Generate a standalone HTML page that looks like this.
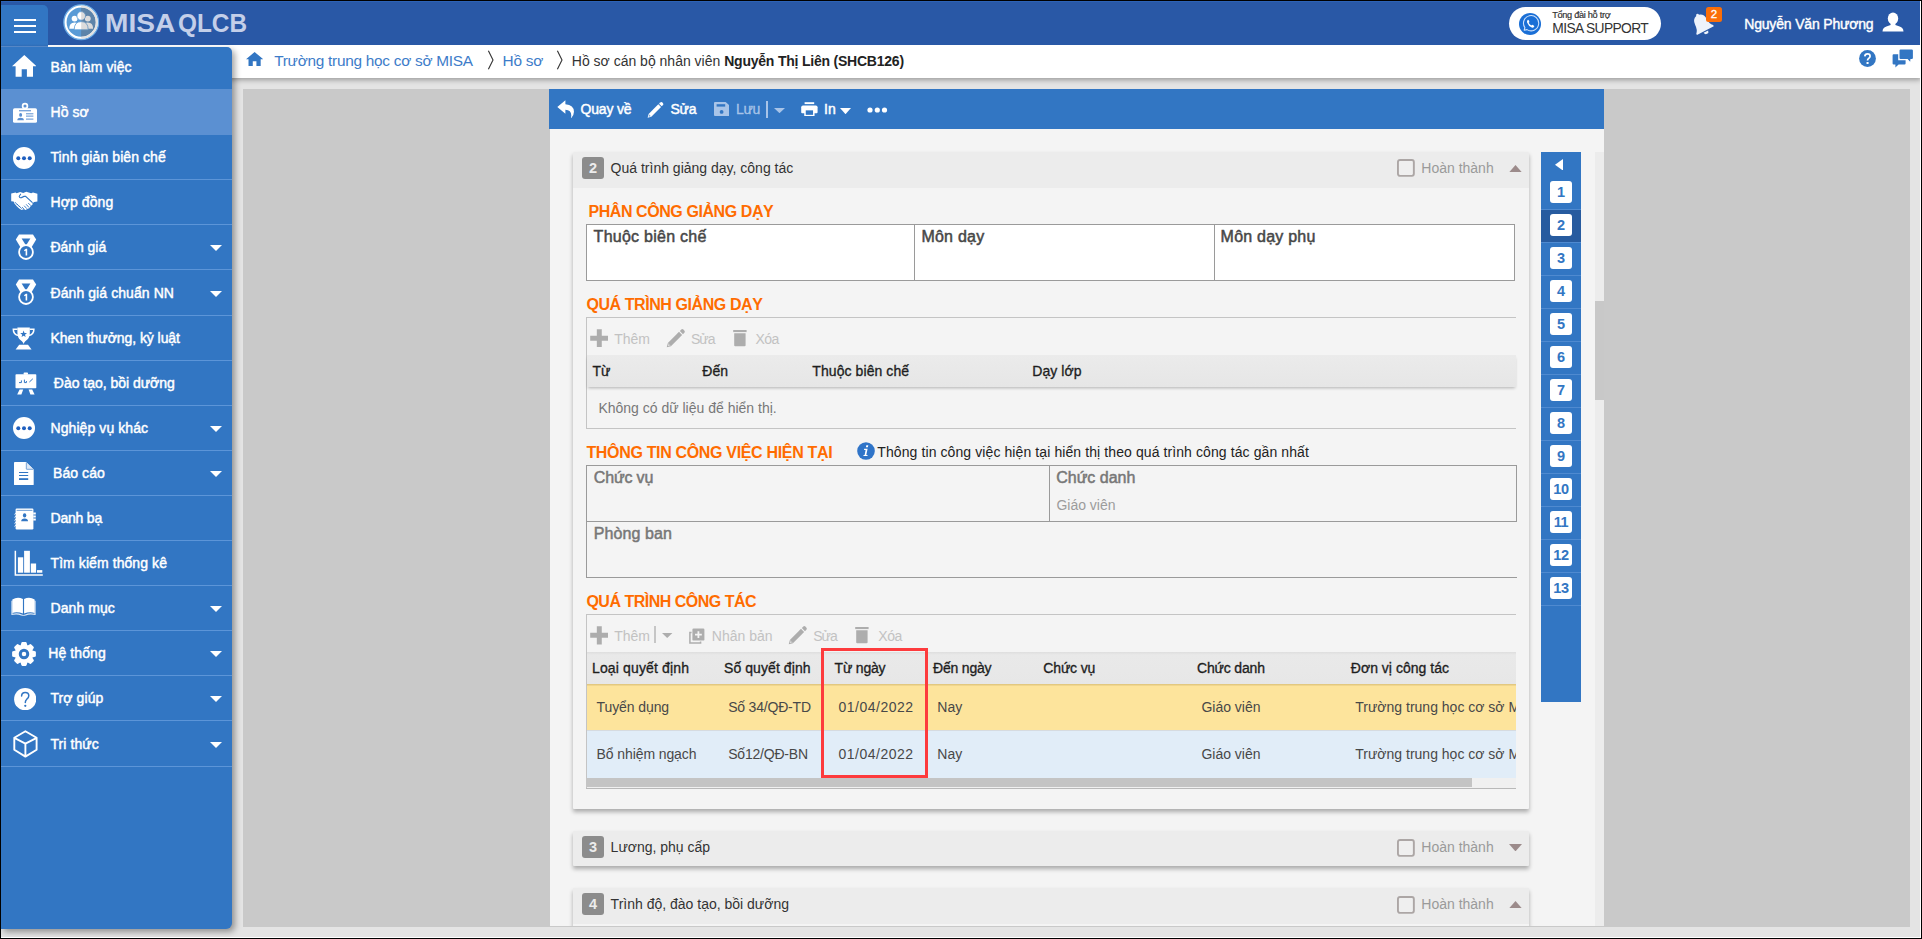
<!DOCTYPE html>
<html lang="vi">
<head>
<meta charset="utf-8">
<title>MISA QLCB</title>
<style>
*{box-sizing:border-box;margin:0;padding:0}
html,body{width:1922px;height:939px;overflow:hidden;background:#000}
body{font-family:"Liberation Sans",sans-serif;font-size:14px;color:#222;position:relative}
.abs{position:absolute}
#frame{position:absolute;left:1px;top:1px;width:1920px;height:937px;background:#fff;overflow:hidden}
#app{position:absolute;left:0;top:0;width:1919px;height:936px;background:#e4e4e4;overflow:hidden}
/* all children of #app are placed in page coords minus 1 */
#hdr{position:absolute;left:0;top:0;width:1919px;height:44px;background:#2958a6;border-top:1px solid #2c62b6}
#tab{position:absolute;left:0;top:4px;width:47px;height:44px;background:#3276c3;border-radius:0 5px 0 0}
#tab i{position:absolute;left:13px;width:22px;height:2px;background:#fff}
#crumb{position:absolute;left:0;top:44px;width:1919px;height:33px;background:#fff;box-shadow:0 1px 5px 1px rgba(0,0,0,.32)}
#side{position:absolute;left:0;top:46px;width:231px;height:882px;background:#3276c3;border-radius:0 5px 6px 0;box-shadow:3px 3px 6px 0 rgba(0,0,0,.36);overflow:hidden}
.mi{position:absolute;left:0;width:231px;border-bottom:1px solid #5c95d8;color:#fff}
.mi.sel{background:#5b90d2;border:0}
.mi span{position:absolute;left:49.5px;top:50%;margin-top:-9px;line-height:18px;white-space:nowrap;font-size:14px;letter-spacing:.08px;-webkit-text-stroke:.45px #fff}
.mi svg{position:absolute}
.mi .car{position:absolute;left:209px;top:50%;margin-top:-2px;width:0;height:0;border-left:6px solid transparent;border-right:6px solid transparent;border-top:6px solid #fff}
#gray{position:absolute;left:242px;top:88px;width:1667px;height:838px;background:#c9c9c9}
#panel{position:absolute;left:548px;top:88px;width:1055px;height:837px;background:#f4f4f4;overflow:hidden}
#tbar{position:absolute;left:0;top:0;width:1055px;height:40px;background:#3276c3;color:#fff}
</style>
</head>
<body>
<div id="frame"><div id="app">
  <div id="gray"></div>
  <div id="panel">
    <div id="tbar"></div>
    <svg class="abs" style="left:7.60px;top:10.60px;" width="17.4" height="18.6" viewBox="0 0 17 18.2"><path fill="#fff" d="M0.3 6.9 L8.2 0.3 V4.1 Q16.6 4.6 16.6 11.6 Q16.6 15.2 13.6 18 Q15.4 9.6 8.2 9.5 V13.5 Z"/></svg>
<div class="abs" style="left:31.60px;top:11.15px;font-size:14px;line-height:18px;color:#fff;white-space:nowrap;letter-spacing:-0.2px;-webkit-text-stroke:0.45px #fff">Quay về</div>
<svg class="abs" style="left:97.60px;top:11.90px;" width="17.4" height="17.4" viewBox="0 0 19 19"><g fill="#fff"><path d="M0.7 18.3 L1.77 14.27 L4.73 17.23 Z"/><path d="M1.77 14.27 L12.37 3.67 L15.33 6.63 L4.73 17.23 Z"/><path d="M13.15 2.89 L14.5 1.54 Q15.5 0.6 16.5 1.5 L17.5 2.5 Q18.4 3.5 17.46 4.5 L16.11 5.85 Z"/></g><path d="M1.75 16.9 L2.35 15.35 L3.65 16.65 Z" fill="#3276c3"/></svg>
<div class="abs" style="left:121.50px;top:11.15px;font-size:14px;line-height:18px;color:#fff;white-space:nowrap;letter-spacing:-0.25px;-webkit-text-stroke:0.45px #fff">Sửa</div>
<svg class="abs" style="left:164.60px;top:12.80px;" width="15.6" height="14" viewBox="0 0 15.6 14"><path fill="#a8c4e8" d="M1 0 H11.6 L15.6 3.6 V13 Q15.6 14 14.6 14 H1 Q0 14 0 13 V1 Q0 0 1 0 Z"/><rect x="2.6" y="2.2" width="8.6" height="2.4" fill="#3276c3"/><circle cx="7.6" cy="9.9" r="1.9" fill="#3276c3"/></svg>
<div class="abs" style="left:187.00px;top:11.15px;font-size:14px;line-height:18px;color:#a8c4e8;white-space:nowrap;letter-spacing:-0.3px;-webkit-text-stroke:0.3px #a8c4e8">Lưu</div>
<div class="abs" style="left:217.40px;top:12.00px;width:2px;height:17px;background:#a8c4e8"></div>
<svg class="abs" style="left:225.00px;top:18.80px;" width="11" height="5.2" viewBox="0 0 11 5.2"><path fill="#a8c4e8" d="M0 0 H11 L5.5 5.2 Z"/></svg>
<svg class="abs" style="left:252.20px;top:12.60px;" width="16.8" height="14.4" viewBox="0 0 16.8 14.4"><g fill="#fff"><rect x="3.6" y="0.2" width="9.6" height="1.9"/><path d="M2 3.4 H14.8 Q16.6 3.4 16.6 5.2 V10.2 Q16.6 11.2 15.6 11.2 H1.2 Q0.2 11.2 0.2 10.2 V5.2 Q0.2 3.4 2 3.4 Z"/></g><rect x="4" y="7.6" width="8.8" height="6" fill="#3276c3" stroke="#fff" stroke-width="1.5"/></svg>
<div class="abs" style="left:275.00px;top:11.15px;font-size:14px;line-height:18px;color:#fff;white-space:nowrap;-webkit-text-stroke:0.45px #fff">In</div>
<svg class="abs" style="left:291.20px;top:18.80px;" width="11" height="6.2" viewBox="0 0 11 6.2"><path fill="#fff" d="M0 0 H11 L5.5 6.2 Z"/></svg>
<svg class="abs" style="left:317.60px;top:18.00px;" width="21" height="6" viewBox="0 0 21 6"><g fill="#fff"><circle cx="3" cy="3" r="2.6"/><circle cx="10.3" cy="3" r="2.6"/><circle cx="17.5" cy="3" r="2.6"/></g></svg>
<div class="abs" style="left:0.00px;top:40.00px;width:1px;height:800px;background:#c9c9c9"></div>
<div class="abs" style="left:24.00px;top:63.00px;width:956px;height:657px;background:#f4f4f4;border-radius:1px;box-shadow:0 3px 4px rgba(0,0,0,.30)"></div>
<div class="abs" style="left:24.00px;top:63.00px;width:956px;height:36px;background:#ececec;border-radius:1px 1px 0 0"></div>
<div class="abs" style="left:33.00px;top:68.00px;width:22px;height:22px;background:#8c8c8c;border-radius:3px"></div>
<div class="abs" style="left:33.00px;top:69.68px;font-size:14.5px;line-height:19px;color:#ececec;white-space:nowrap;font-weight:700;width:22px;text-align:center">2</div>
<div class="abs" style="left:61.60px;top:70.45px;font-size:14px;line-height:18px;color:#333;white-space:nowrap">Quá trình giảng dạy, công tác</div>
<svg class="abs" style="left:848.00px;top:70.20px;" width="17.8" height="17.8" viewBox="0 0 17.8 17.8"><rect x="0.95" y="0.95" width="15.9" height="15.9" rx="2" fill="#efefef" stroke="#aca6a5" stroke-width="1.9"/></svg>
<div class="abs" style="left:872.30px;top:70.45px;font-size:14px;line-height:18px;color:#9a9a9a;white-space:nowrap">Hoàn thành</div>
<svg class="abs" style="left:959.60px;top:75.60px;" width="13" height="7.4" viewBox="0 0 13 7.4"><path fill="#9c8b8b" d="M6.5 0 L13 7.4 H0 Z"/></svg>
<div class="abs" style="left:39.40px;top:112.16px;font-size:16px;line-height:21px;color:#ff6c00;white-space:nowrap;font-weight:700;letter-spacing:-0.42px">PHÂN CÔNG GIẢNG DẠY</div>
<div class="abs" style="left:37.00px;top:135.00px;width:929px;height:57px;background:#fff;border:1px solid #9a9a9a"></div>
<div class="abs" style="left:365.00px;top:135.00px;width:1px;height:57px;background:#9a9a9a"></div>
<div class="abs" style="left:665.00px;top:135.00px;width:1px;height:57px;background:#9a9a9a"></div>
<div class="abs" style="left:44.60px;top:136.76px;font-size:16px;line-height:21px;color:#474747;white-space:nowrap;letter-spacing:0.26px;-webkit-text-stroke:0.5px #474747">Thuộc biên chế</div>
<div class="abs" style="left:372.40px;top:136.76px;font-size:16px;line-height:21px;color:#474747;white-space:nowrap;letter-spacing:0.23px;-webkit-text-stroke:0.5px #474747">Môn dạy</div>
<div class="abs" style="left:671.60px;top:136.76px;font-size:16px;line-height:21px;color:#474747;white-space:nowrap;letter-spacing:0.23px;-webkit-text-stroke:0.5px #474747">Môn dạy phụ</div>
<div class="abs" style="left:37.40px;top:205.16px;font-size:16px;line-height:21px;color:#ff6c00;white-space:nowrap;font-weight:700;letter-spacing:-0.42px">QUÁ TRÌNH GIẢNG DẠY</div>
<div class="abs" style="left:37.00px;top:228.00px;width:930px;height:112px;border:1px solid #c4c4c4;border-right:0"></div>
<svg class="abs" style="left:40.50px;top:239.90px;" width="18.6" height="18.6" viewBox="0 0 18 18"><path fill="#adadad" d="M6.6 0.2 H11.4 V6.6 H17.8 V11.4 H11.4 V17.8 H6.6 V11.4 H0.2 V6.6 H6.6 Z"/></svg>
<div class="abs" style="left:65.20px;top:240.55px;font-size:14px;line-height:18px;color:#c2c2c2;white-space:nowrap">Thêm</div>
<svg class="abs" style="left:116.60px;top:238.70px;" width="20" height="20" viewBox="0 0 19 19"><g fill="#adadad"><path d="M0.7 18.3 L1.77 14.27 L4.73 17.23 Z"/><path d="M1.77 14.27 L12.37 3.67 L15.33 6.63 L4.73 17.23 Z"/><path d="M13.15 2.89 L14.5 1.54 Q15.5 0.6 16.5 1.5 L17.5 2.5 Q18.4 3.5 17.46 4.5 L16.11 5.85 Z"/></g><path d="M1.75 16.9 L2.35 15.35 L3.65 16.65 Z" fill="#f4f4f4"/></svg>
<div class="abs" style="left:142.00px;top:240.55px;font-size:14px;line-height:18px;color:#c2c2c2;white-space:nowrap;letter-spacing:-1.0px">Sửa</div>
<svg class="abs" style="left:183.90px;top:240.60px;" width="14" height="17" viewBox="0 0 14 17"><g fill="#adadad"><rect x="0.2" y="0" width="13.4" height="2.1"/><path d="M1.2 3.3 H12.6 V15.2 Q12.6 16.3 11.5 16.3 H2.3 Q1.2 16.3 1.2 15.2 Z"/></g></svg>
<div class="abs" style="left:206.50px;top:240.55px;font-size:14px;line-height:18px;color:#c2c2c2;white-space:nowrap;letter-spacing:-0.5px">Xóa</div>
<div class="abs" style="left:38.00px;top:266.00px;width:929px;height:32px;background:linear-gradient(#ebebeb,#e6e6e6);box-shadow:0 2px 3px -1px rgba(0,0,0,.28)"></div>
<div class="abs" style="left:43.40px;top:273.15px;font-size:14px;line-height:18px;color:#1e1e1e;white-space:nowrap;letter-spacing:0.08px;-webkit-text-stroke:0.32px #1e1e1e">Từ</div>
<div class="abs" style="left:153.20px;top:273.15px;font-size:14px;line-height:18px;color:#1e1e1e;white-space:nowrap;letter-spacing:0.08px;-webkit-text-stroke:0.32px #1e1e1e">Đến</div>
<div class="abs" style="left:263.30px;top:273.15px;font-size:14px;line-height:18px;color:#1e1e1e;white-space:nowrap;letter-spacing:0.08px;-webkit-text-stroke:0.32px #1e1e1e">Thuộc biên chế</div>
<div class="abs" style="left:483.20px;top:273.15px;font-size:14px;line-height:18px;color:#1e1e1e;white-space:nowrap;letter-spacing:0.08px;-webkit-text-stroke:0.32px #1e1e1e">Dạy lớp</div>
<div class="abs" style="left:49.40px;top:310.35px;font-size:14px;line-height:18px;color:#787878;white-space:nowrap">Không có dữ liệu để hiển thị.</div>
<div class="abs" style="left:37.40px;top:353.16px;font-size:16px;line-height:21px;color:#ff6c00;white-space:nowrap;font-weight:700;letter-spacing:-0.33px">THÔNG TIN CÔNG VIỆC HIỆN TẠI</div>
<svg class="abs" style="left:307.70px;top:353.30px;" width="18" height="18" viewBox="0 0 18 18"><circle cx="9" cy="9" r="8.8" fill="#2f74c8"/><path fill="#fff" d="M9.3 3.2 H11.3 L10.9 5.2 H8.9 Z M7.2 6.8 H10.6 L9.3 13 H10.6 L10.4 14 H6.4 L6.6 13 H7.6 L8.6 7.9 H7 Z"/></svg>
<div class="abs" style="left:328.30px;top:354.05px;font-size:14px;line-height:18px;color:#222;white-space:nowrap;letter-spacing:0.095px">Thông tin công việc hiện tại hiển thị theo quá trình công tác gần nhất</div>
<div class="abs" style="left:37.00px;top:376.00px;width:931px;height:57px;border:1px solid #9a9a9a"></div>
<div class="abs" style="left:500.00px;top:376.00px;width:1px;height:57px;background:#9a9a9a"></div>
<div class="abs" style="left:37.00px;top:432.00px;width:931px;height:57px;border:1px solid #9a9a9a;border-right:0"></div>
<div class="abs" style="left:44.80px;top:378.16px;font-size:16px;line-height:21px;color:#777;white-space:nowrap;letter-spacing:-0.17px;-webkit-text-stroke:0.5px #777">Chức vụ</div>
<div class="abs" style="left:507.20px;top:378.16px;font-size:16px;line-height:21px;color:#777;white-space:nowrap;-webkit-text-stroke:0.5px #777">Chức danh</div>
<div class="abs" style="left:507.40px;top:406.75px;font-size:14px;line-height:18px;color:#9c9c9c;white-space:nowrap">Giáo viên</div>
<div class="abs" style="left:44.80px;top:434.16px;font-size:16px;line-height:21px;color:#777;white-space:nowrap;letter-spacing:0.1px;-webkit-text-stroke:0.5px #777">Phòng ban</div>
<div class="abs" style="left:37.40px;top:501.76px;font-size:16px;line-height:21px;color:#ff6c00;white-space:nowrap;font-weight:700;letter-spacing:-0.5px">QUÁ TRÌNH CÔNG TÁC</div>
<div class="abs" style="left:37.00px;top:525.00px;width:930px;height:175px;border:1px solid #c4c4c4;border-right:0"></div>
<svg class="abs" style="left:40.50px;top:537.10px;" width="18.6" height="18.6" viewBox="0 0 18 18"><path fill="#adadad" d="M6.6 0.2 H11.4 V6.6 H17.8 V11.4 H11.4 V17.8 H6.6 V11.4 H0.2 V6.6 H6.6 Z"/></svg>
<div class="abs" style="left:65.20px;top:537.75px;font-size:14px;line-height:18px;color:#c2c2c2;white-space:nowrap">Thêm</div>
<div class="abs" style="left:105.40px;top:537.00px;width:1.6px;height:17px;background:#c6c6c6"></div>
<svg class="abs" style="left:113.20px;top:543.60px;" width="10.4" height="5" viewBox="0 0 10.4 5"><path fill="#adadad" d="M0 0 H10.4 L5.2 5 Z"/></svg>
<svg class="abs" style="left:139.60px;top:538.60px;" width="16" height="16" viewBox="0 0 16 16"><path fill="none" stroke="#adadad" stroke-width="1.5" d="M2.6 4.4 H0.9 V15 H11.6 V13.4"/><rect x="3.4" y="0.6" width="12" height="12" rx="1.2" fill="#adadad"/><path d="M9.4 3.2 V10 M6 6.6 H12.8" stroke="#f4f4f4" stroke-width="1.8"/></svg>
<div class="abs" style="left:162.80px;top:537.75px;font-size:14px;line-height:18px;color:#c2c2c2;white-space:nowrap">Nhân bản</div>
<svg class="abs" style="left:239.10px;top:535.70px;" width="20" height="20" viewBox="0 0 19 19"><g fill="#adadad"><path d="M0.7 18.3 L1.77 14.27 L4.73 17.23 Z"/><path d="M1.77 14.27 L12.37 3.67 L15.33 6.63 L4.73 17.23 Z"/><path d="M13.15 2.89 L14.5 1.54 Q15.5 0.6 16.5 1.5 L17.5 2.5 Q18.4 3.5 17.46 4.5 L16.11 5.85 Z"/></g><path d="M1.75 16.9 L2.35 15.35 L3.65 16.65 Z" fill="#f4f4f4"/></svg>
<div class="abs" style="left:264.20px;top:537.75px;font-size:14px;line-height:18px;color:#c2c2c2;white-space:nowrap;letter-spacing:-1.0px">Sửa</div>
<svg class="abs" style="left:305.80px;top:537.80px;" width="14" height="17" viewBox="0 0 14 17"><g fill="#adadad"><rect x="0.2" y="0" width="13.4" height="2.1"/><path d="M1.2 3.3 H12.6 V15.2 Q12.6 16.3 11.5 16.3 H2.3 Q1.2 16.3 1.2 15.2 Z"/></g></svg>
<div class="abs" style="left:329.30px;top:537.75px;font-size:14px;line-height:18px;color:#c2c2c2;white-space:nowrap;letter-spacing:-0.5px">Xóa</div>
<div class="abs" style="left:38.00px;top:563.40px;width:929px;height:31.6px;background:linear-gradient(#dedede,#e9e9e9 3px,#e7e7e7)"></div>
<div class="abs" style="left:43.00px;top:569.85px;font-size:14px;line-height:18px;color:#1e1e1e;white-space:nowrap;letter-spacing:0.14px;-webkit-text-stroke:0.32px #1e1e1e">Loại quyết định</div>
<div class="abs" style="left:175.00px;top:569.85px;font-size:14px;line-height:18px;color:#1e1e1e;white-space:nowrap;letter-spacing:0.08px;-webkit-text-stroke:0.32px #1e1e1e">Số quyết định</div>
<div class="abs" style="left:285.60px;top:569.85px;font-size:14px;line-height:18px;color:#1e1e1e;white-space:nowrap;letter-spacing:-0.2px;-webkit-text-stroke:0.32px #1e1e1e">Từ ngày</div>
<div class="abs" style="left:384.00px;top:569.85px;font-size:14px;line-height:18px;color:#1e1e1e;white-space:nowrap;letter-spacing:-0.19px;-webkit-text-stroke:0.32px #1e1e1e">Đến ngày</div>
<div class="abs" style="left:494.30px;top:569.85px;font-size:14px;line-height:18px;color:#1e1e1e;white-space:nowrap;letter-spacing:-0.15px;-webkit-text-stroke:0.32px #1e1e1e">Chức vụ</div>
<div class="abs" style="left:648.00px;top:569.85px;font-size:14px;line-height:18px;color:#1e1e1e;white-space:nowrap;letter-spacing:-0.17px;-webkit-text-stroke:0.32px #1e1e1e">Chức danh</div>
<div class="abs" style="left:801.80px;top:569.85px;font-size:14px;line-height:18px;color:#1e1e1e;white-space:nowrap;letter-spacing:0.02px;-webkit-text-stroke:0.32px #1e1e1e">Đơn vị công tác</div>
<div class="abs" style="left:38.00px;top:595.00px;width:929px;height:46.4px;background:linear-gradient(#dcc179,#fde49c 2.5px)"></div>
<div class="abs" style="left:38.00px;top:641.40px;width:929px;height:47.4px;background:#e1edf8;border-top:1px solid #d6dbe0"></div>
<div class="abs" style="left:47.60px;top:609.05px;font-size:14px;line-height:18px;color:#484848;white-space:nowrap;letter-spacing:-0.1px">Tuyển dụng</div>
<div class="abs" style="left:179.20px;top:609.05px;font-size:14px;line-height:18px;color:#484848;white-space:nowrap;letter-spacing:-0.2px">Số 34/QĐ-TD</div>
<div class="abs" style="left:289.50px;top:609.05px;font-size:14px;line-height:18px;color:#484848;white-space:nowrap;letter-spacing:0.5px">01/04/2022</div>
<div class="abs" style="left:388.30px;top:609.05px;font-size:14px;line-height:18px;color:#484848;white-space:nowrap">Nay</div>
<div class="abs" style="left:652.40px;top:609.05px;font-size:14px;line-height:18px;color:#484848;white-space:nowrap">Giáo viên</div>
<div class="abs" style="left:806.30px;top:608.50px;width:160.7px;overflow:hidden;font-size:14px;line-height:18px;color:#484848;white-space:nowrap">Trường trung học cơ sở MISA</div>
<div class="abs" style="left:47.60px;top:656.05px;font-size:14px;line-height:18px;color:#484848;white-space:nowrap;letter-spacing:-0.1px">Bổ nhiệm ngạch</div>
<div class="abs" style="left:179.20px;top:656.05px;font-size:14px;line-height:18px;color:#484848;white-space:nowrap;letter-spacing:-0.2px">Số12/QĐ-BN</div>
<div class="abs" style="left:289.50px;top:656.05px;font-size:14px;line-height:18px;color:#484848;white-space:nowrap;letter-spacing:0.5px">01/04/2022</div>
<div class="abs" style="left:388.30px;top:656.05px;font-size:14px;line-height:18px;color:#484848;white-space:nowrap">Nay</div>
<div class="abs" style="left:652.40px;top:656.05px;font-size:14px;line-height:18px;color:#484848;white-space:nowrap">Giáo viên</div>
<div class="abs" style="left:806.30px;top:655.50px;width:160.7px;overflow:hidden;font-size:14px;line-height:18px;color:#484848;white-space:nowrap">Trường trung học cơ sở MISA</div>
<div class="abs" style="left:38.00px;top:688.60px;width:929px;height:10.4px;background:#f0f0f0"></div>
<div class="abs" style="left:38.00px;top:688.60px;width:885px;height:9.4px;background:#c4c4c4"></div>
<div class="abs" style="left:37.00px;top:699.00px;width:930px;height:1.2px;background:#b9b9b9"></div>
<div class="abs" style="left:272.00px;top:559.00px;width:107.4px;height:130px;border:3px solid #fd3b3d"></div>
<div class="abs" style="left:24.00px;top:742.00px;width:956px;height:35px;background:#ececec;border-radius:1px;box-shadow:0 3px 4px rgba(0,0,0,.30)"></div>
<div class="abs" style="left:33.00px;top:747.00px;width:22px;height:22px;background:#8c8c8c;border-radius:3px"></div>
<div class="abs" style="left:33.00px;top:748.68px;font-size:14.5px;line-height:19px;color:#ececec;white-space:nowrap;font-weight:700;width:22px;text-align:center">3</div>
<div class="abs" style="left:61.60px;top:749.45px;font-size:14px;line-height:18px;color:#333;white-space:nowrap">Lương, phụ cấp</div>
<svg class="abs" style="left:848.00px;top:750.00px;" width="17.8" height="17.8" viewBox="0 0 17.8 17.8"><rect x="0.95" y="0.95" width="15.9" height="15.9" rx="2" fill="#efefef" stroke="#aca6a5" stroke-width="1.9"/></svg>
<div class="abs" style="left:872.30px;top:749.45px;font-size:14px;line-height:18px;color:#9a9a9a;white-space:nowrap">Hoàn thành</div>
<svg class="abs" style="left:959.60px;top:755.00px;" width="13" height="7.4" viewBox="0 0 13 7.4"><path fill="#9c8b8b" d="M0 0 H13 L6.5 7.4 Z"/></svg>
<div class="abs" style="left:24.00px;top:799.00px;width:956px;height:60px;background:#f4f4f4;border-radius:1px;box-shadow:0 3px 4px rgba(0,0,0,.30)"></div>
<div class="abs" style="left:24.00px;top:799.00px;width:956px;height:36px;background:#ececec"></div>
<div class="abs" style="left:33.00px;top:804.00px;width:22px;height:22px;background:#8c8c8c;border-radius:3px"></div>
<div class="abs" style="left:33.00px;top:805.68px;font-size:14.5px;line-height:19px;color:#ececec;white-space:nowrap;font-weight:700;width:22px;text-align:center">4</div>
<div class="abs" style="left:61.60px;top:806.45px;font-size:14px;line-height:18px;color:#333;white-space:nowrap">Trình độ, đào tạo, bồi dưỡng</div>
<svg class="abs" style="left:848.00px;top:807.00px;" width="17.8" height="17.8" viewBox="0 0 17.8 17.8"><rect x="0.95" y="0.95" width="15.9" height="15.9" rx="2" fill="#efefef" stroke="#aca6a5" stroke-width="1.9"/></svg>
<div class="abs" style="left:872.30px;top:806.45px;font-size:14px;line-height:18px;color:#9a9a9a;white-space:nowrap">Hoàn thành</div>
<svg class="abs" style="left:959.60px;top:811.60px;" width="13" height="7.4" viewBox="0 0 13 7.4"><path fill="#9c8b8b" d="M6.5 0 L13 7.4 H0 Z"/></svg>
<div class="abs" style="left:992.00px;top:63.00px;width:40px;height:550px;background:#3276c3"></div>
<svg class="abs" style="left:1006.40px;top:69.80px;" width="8" height="11.6" viewBox="0 0 8 11.6"><path fill="#fff" d="M8 0 V11.6 L0 5.8 Z"/></svg>
<div class="abs" style="left:992.00px;top:88.00px;width:40px;height:33px;border-bottom:1px solid #4f8ad0"></div>
<div class="abs" style="left:1001.00px;top:92.00px;width:22px;height:22px;background:#fff;border-radius:3px"></div>
<div class="abs" style="left:1001.00px;top:93.68px;font-size:14.5px;line-height:19px;color:#3276c3;white-space:nowrap;font-weight:700;width:22px;text-align:center;letter-spacing:-0.3px">1</div>
<div class="abs" style="left:992.00px;top:121.00px;width:40px;height:33px;background:#275b9f;border-bottom:1px solid #4f8ad0"></div>
<div class="abs" style="left:1001.00px;top:125.00px;width:22px;height:22px;background:#fff;border-radius:3px"></div>
<div class="abs" style="left:1001.00px;top:126.68px;font-size:14.5px;line-height:19px;color:#3276c3;white-space:nowrap;font-weight:700;width:22px;text-align:center;letter-spacing:-0.3px">2</div>
<div class="abs" style="left:992.00px;top:154.00px;width:40px;height:33px;border-bottom:1px solid #4f8ad0"></div>
<div class="abs" style="left:1001.00px;top:158.00px;width:22px;height:22px;background:#fff;border-radius:3px"></div>
<div class="abs" style="left:1001.00px;top:159.68px;font-size:14.5px;line-height:19px;color:#3276c3;white-space:nowrap;font-weight:700;width:22px;text-align:center;letter-spacing:-0.3px">3</div>
<div class="abs" style="left:992.00px;top:187.00px;width:40px;height:33px;border-bottom:1px solid #4f8ad0"></div>
<div class="abs" style="left:1001.00px;top:191.00px;width:22px;height:22px;background:#fff;border-radius:3px"></div>
<div class="abs" style="left:1001.00px;top:192.68px;font-size:14.5px;line-height:19px;color:#3276c3;white-space:nowrap;font-weight:700;width:22px;text-align:center;letter-spacing:-0.3px">4</div>
<div class="abs" style="left:992.00px;top:220.00px;width:40px;height:33px;border-bottom:1px solid #4f8ad0"></div>
<div class="abs" style="left:1001.00px;top:224.00px;width:22px;height:22px;background:#fff;border-radius:3px"></div>
<div class="abs" style="left:1001.00px;top:225.68px;font-size:14.5px;line-height:19px;color:#3276c3;white-space:nowrap;font-weight:700;width:22px;text-align:center;letter-spacing:-0.3px">5</div>
<div class="abs" style="left:992.00px;top:253.00px;width:40px;height:33px;border-bottom:1px solid #4f8ad0"></div>
<div class="abs" style="left:1001.00px;top:257.00px;width:22px;height:22px;background:#fff;border-radius:3px"></div>
<div class="abs" style="left:1001.00px;top:258.68px;font-size:14.5px;line-height:19px;color:#3276c3;white-space:nowrap;font-weight:700;width:22px;text-align:center;letter-spacing:-0.3px">6</div>
<div class="abs" style="left:992.00px;top:286.00px;width:40px;height:33px;border-bottom:1px solid #4f8ad0"></div>
<div class="abs" style="left:1001.00px;top:290.00px;width:22px;height:22px;background:#fff;border-radius:3px"></div>
<div class="abs" style="left:1001.00px;top:291.68px;font-size:14.5px;line-height:19px;color:#3276c3;white-space:nowrap;font-weight:700;width:22px;text-align:center;letter-spacing:-0.3px">7</div>
<div class="abs" style="left:992.00px;top:319.00px;width:40px;height:33px;border-bottom:1px solid #4f8ad0"></div>
<div class="abs" style="left:1001.00px;top:323.00px;width:22px;height:22px;background:#fff;border-radius:3px"></div>
<div class="abs" style="left:1001.00px;top:324.68px;font-size:14.5px;line-height:19px;color:#3276c3;white-space:nowrap;font-weight:700;width:22px;text-align:center;letter-spacing:-0.3px">8</div>
<div class="abs" style="left:992.00px;top:352.00px;width:40px;height:33px;border-bottom:1px solid #4f8ad0"></div>
<div class="abs" style="left:1001.00px;top:356.00px;width:22px;height:22px;background:#fff;border-radius:3px"></div>
<div class="abs" style="left:1001.00px;top:357.68px;font-size:14.5px;line-height:19px;color:#3276c3;white-space:nowrap;font-weight:700;width:22px;text-align:center;letter-spacing:-0.3px">9</div>
<div class="abs" style="left:992.00px;top:385.00px;width:40px;height:33px;border-bottom:1px solid #4f8ad0"></div>
<div class="abs" style="left:1001.00px;top:389.00px;width:22px;height:22px;background:#fff;border-radius:3px"></div>
<div class="abs" style="left:1001.00px;top:390.68px;font-size:14.5px;line-height:19px;color:#3276c3;white-space:nowrap;font-weight:700;width:22px;text-align:center;letter-spacing:-0.3px">10</div>
<div class="abs" style="left:992.00px;top:418.00px;width:40px;height:33px;border-bottom:1px solid #4f8ad0"></div>
<div class="abs" style="left:1001.00px;top:422.00px;width:22px;height:22px;background:#fff;border-radius:3px"></div>
<div class="abs" style="left:1001.00px;top:423.68px;font-size:14.5px;line-height:19px;color:#3276c3;white-space:nowrap;font-weight:700;width:22px;text-align:center;letter-spacing:-0.3px">11</div>
<div class="abs" style="left:992.00px;top:451.00px;width:40px;height:33px;border-bottom:1px solid #4f8ad0"></div>
<div class="abs" style="left:1001.00px;top:455.00px;width:22px;height:22px;background:#fff;border-radius:3px"></div>
<div class="abs" style="left:1001.00px;top:456.68px;font-size:14.5px;line-height:19px;color:#3276c3;white-space:nowrap;font-weight:700;width:22px;text-align:center;letter-spacing:-0.3px">12</div>
<div class="abs" style="left:992.00px;top:484.00px;width:40px;height:33px;border-bottom:1px solid #4f8ad0"></div>
<div class="abs" style="left:1001.00px;top:488.00px;width:22px;height:22px;background:#fff;border-radius:3px"></div>
<div class="abs" style="left:1001.00px;top:489.68px;font-size:14.5px;line-height:19px;color:#3276c3;white-space:nowrap;font-weight:700;width:22px;text-align:center;letter-spacing:-0.3px">13</div>
<div class="abs" style="left:1046.00px;top:63.00px;width:9px;height:775px;background:#ececec"></div>
<div class="abs" style="left:1046.00px;top:212.00px;width:9px;height:99px;background:#c8c8c8"></div>
  </div>
  <div id="crumb"><svg class="abs" style="left:245.20px;top:7.30px" width="17.2" height="14" viewBox="0 0 24.6 20"><path fill="#3276c3" d="M12.3 0 L24.6 10.4 H21 V20 H14.9 V13.2 H9.7 V20 H3.6 V10.4 H0 Z"/></svg>
<div class="abs" style="left:273.20px;top:6.70px;font-size:15.4px;line-height:18px;letter-spacing:-0.27px;color:#3d7cc9;white-space:nowrap">Trường trung học cơ sở MISA</div>
<svg class="abs" style="left:485.00px;top:5.00px" width="10" height="20" viewBox="0 0 10 20"><path d="M2.4 0.8 L7 10 L2.4 19.2" fill="none" stroke="#333" stroke-width="1.1"/></svg>
<div class="abs" style="left:501.60px;top:6.70px;font-size:15.4px;line-height:18px;letter-spacing:-0.27px;color:#3d7cc9;white-space:nowrap">Hồ sơ</div>
<svg class="abs" style="left:554.00px;top:5.00px" width="10" height="20" viewBox="0 0 10 20"><path d="M2.4 0.8 L7 10 L2.4 19.2" fill="none" stroke="#333" stroke-width="1.1"/></svg>
<div class="abs" style="left:570.80px;top:6.60px;font-size:14px;line-height:18px;color:#333;white-space:nowrap">Hồ sơ cán bộ nhân viên <b style="letter-spacing:-0.22px;color:#222">Nguyễn Thị Liên (SHCB126)</b></div>
<svg class="abs" style="left:1857.60px;top:5.10px" width="17" height="17" viewBox="0 0 17 17"><circle cx="8.5" cy="8.5" r="8.4" fill="#3276c3"/><path d="M5.8 6.4 Q6 3.9 8.5 3.9 Q11.1 3.9 11.1 6.2 Q11.1 7.4 9.7 8.4 Q8.5 9.3 8.5 10.6" fill="none" stroke="#fff" stroke-width="1.7"/><rect x="7.5" y="12" width="2.1" height="1.9" rx="0.5" fill="#fff"/></svg>
<svg class="abs" style="left:1890.50px;top:3.50px" width="22" height="19" viewBox="0 0 22 19">
<path fill="#3276c3" d="M1.6 5.3 H6.2 V11.2 H13.6 V14.6 Q13.6 15.6 12.6 15.6 H6.6 L3.4 18.6 V15.6 H1.6 Q0.6 15.6 0.6 14.6 V6.3 Q0.6 5.3 1.6 5.3 Z"/>
<path fill="#3276c3" d="M8.6 0.5 H19.8 Q20.9 0.5 20.9 1.6 V9 Q20.9 10.1 19.8 10.1 H18.4 L18.2 12.8 L15.6 10.1 H8.6 Q7.5 10.1 7.5 9 V1.6 Q7.5 0.5 8.6 0.5 Z"/></svg></div>
  <div id="hdr"><svg class="abs" style="left:62.00px;top:2.30px" width="36.4" height="36.4" viewBox="0 0 36.4 36.4">
<defs><clipPath id="lgc"><circle cx="18.2" cy="18.2" r="15.2"/></clipPath>
<radialGradient id="lgr" cx="50%" cy="50%" r="50%"><stop offset="0.9" stop-color="#8fc1ec"/><stop offset="0.97" stop-color="#5c9ddb" stop-opacity="0.9"/><stop offset="1" stop-color="#3f7fc4" stop-opacity="0.1"/></radialGradient></defs>
<circle cx="18.2" cy="18.2" r="18.1" fill="url(#lgr)"/><circle cx="18.2" cy="18.2" r="17.3" fill="none" stroke="#6aaae4" stroke-width="1.4" opacity="0.9"/>
<circle cx="18.2" cy="18.2" r="15.4" fill="#5a9bd6"/>
<path d="M18.2 2.5 A15.7 15.7 0 0 1 18.2 33.9 Z" fill="#4a81b6"/>
<g clip-path="url(#lgc)">
<g fill="#fff">
<circle cx="11.6" cy="14.6" r="2.95"/><circle cx="24.8" cy="14.6" r="2.95"/>
<path d="M6.3 24.7 Q6.3 18.6 11.6 18.6 Q13.4 18.6 14.6 19.4 L12.2 24.7 Z"/>
<path d="M30.1 24.7 Q30.1 18.6 24.8 18.6 Q23 18.6 21.8 19.4 L24.2 24.7 Z"/>
<circle cx="18.2" cy="11.9" r="4.3" stroke="#5a9bd6" stroke-width="0.8"/>
<path d="M11.2 25.8 Q11.2 17.6 18.2 17.6 Q25.2 17.6 25.2 25.8 Z" stroke="#5a9bd6" stroke-width="0.8"/>
</g>
<rect x="18.2" y="0" width="20" height="36.4" fill="#8a8a8a" opacity="0.30"/>
</g>
<circle cx="18.2" cy="18.2" r="15.6" fill="none" stroke="#fff" stroke-width="2"/>
<path d="M18.2 2.6 A15.6 15.6 0 0 1 18.2 33.8" fill="none" stroke="#e2e2e2" stroke-width="2"/>
</svg>
<div class="abs" style="left:103.80px;top:5.70px;font-size:26px;line-height:30px;font-weight:700;color:#c3cfe9;white-space:nowrap;transform:scaleX(1.08);transform-origin:0 0">MISA</div>
<div class="abs" style="left:177.00px;top:5.70px;font-size:26px;line-height:30px;font-weight:700;color:#c3cfe9;white-space:nowrap;transform:scaleX(0.938);transform-origin:0 0">QLCB</div>
<div class="abs" style="left:1508.00px;top:4.80px;width:152px;height:33px;border-radius:17px;background:#fff"></div>
<svg class="abs" style="left:1518.00px;top:10.80px" width="22" height="22" viewBox="0 0 22 22"><circle cx="11" cy="11" r="11" fill="#1a6fd6"/>
<path d="M5.2 17.2 L5.9 14.6 A7.6 7.6 0 1 1 8 16.6 Z" fill="none" stroke="#cfe2fb" stroke-width="1.1" stroke-linejoin="round"/>
<path d="M8.6 7 Q9.2 6.4 9.7 7.2 L10.3 8.4 Q10.5 8.9 10 9.4 L9.6 9.8 Q10.4 11.6 12.4 12.6 L12.9 12.1 Q13.4 11.7 13.9 12 L15 12.7 Q15.6 13.2 15.1 13.8 Q14.2 15 12.8 14.5 Q9.4 13.2 8.1 9.6 Q7.7 8 8.6 7 Z" fill="#fff"/></svg>
<div class="abs" style="left:1551.20px;top:8.10px;font-size:9.2px;line-height:11px;letter-spacing:-0.3px;color:#333;white-space:nowrap;-webkit-text-stroke:.2px #333">Tổng đài hỗ trợ</div>
<div class="abs" style="left:1551.30px;top:18.60px;font-size:13.8px;line-height:16px;letter-spacing:-0.62px;color:#333;white-space:nowrap">MISA SUPPORT</div>
<svg class="abs" style="left:1686.40px;top:6.90px" width="30" height="30" viewBox="0 0 26 26"><g transform="rotate(-27 13 13)" fill="#eef3fb">
<path d="M13 3.2 Q14.3 3.2 14.3 4.6 Q18.6 5.8 18.6 11 Q18.6 15.6 21.2 18.2 V19.4 H4.8 V18.2 Q7.4 15.6 7.4 11 Q7.4 5.8 11.7 4.6 Q11.7 3.2 13 3.2 Z"/>
<path d="M10.8 20.4 H15.2 Q15 22.6 13 22.6 Q11 22.6 10.8 20.4 Z"/></g></svg>
<div class="abs" style="left:1705.00px;top:5.00px;width:16px;height:15px;border-radius:2.5px;background:#fb6e08;color:#fff;font-size:11.5px;line-height:15px;text-align:center;-webkit-text-stroke:.3px #fff">2</div>
<div class="abs" style="left:1743.20px;top:12.70px;font-size:14px;line-height:18px;letter-spacing:-0.17px;color:#fff;white-space:nowrap;-webkit-text-stroke:.4px #fff">Nguyễn Văn Phương</div>
<svg class="abs" style="left:1880.50px;top:9.50px" width="22" height="20" viewBox="0 0 22 20"><g fill="#fff">
<ellipse cx="11" cy="6.4" rx="5.2" ry="6"/>
<path d="M0.5 19.4 Q0.8 15.6 4.4 14.6 L8.6 13 V10.4 H13.4 V13 L17.6 14.6 Q21.2 15.6 21.5 19.4 Z"/></g></svg></div>
  <div id="side"><div class="mi" style="top:-2px;height:45px"><span style="left:49.5px">Bàn làm việc</span></div>
<div class="mi sel" style="top:42px;height:46px"><span style="left:49.5px">Hồ sơ</span></div>
<div class="mi" style="top:88px;height:45px"><span style="left:49.5px">Tinh giản biên chế</span></div>
<div class="mi" style="top:133px;height:45px"><span style="left:49.5px">Hợp đồng</span></div>
<div class="mi" style="top:178px;height:45px"><span style="left:49.5px;letter-spacing:-0.05px">Đánh giá</span><b class="car"></b></div>
<div class="mi" style="top:223px;height:46px"><span style="left:49.5px">Đánh giá chuẩn NN</span><b class="car"></b></div>
<div class="mi" style="top:269px;height:45px"><span style="left:49.5px;letter-spacing:-0.06px">Khen thưởng, kỷ luật</span></div>
<div class="mi" style="top:314px;height:45px"><span style="left:52.8px;letter-spacing:-0.02px">Đào tạo, bồi dưỡng</span></div>
<div class="mi" style="top:359px;height:45px"><span style="left:49.5px">Nghiệp vụ khác</span><b class="car"></b></div>
<div class="mi" style="top:404px;height:45px"><span style="left:52px">Báo cáo</span><b class="car"></b></div>
<div class="mi" style="top:449px;height:45px"><span style="left:49.5px;letter-spacing:-0.2px">Danh bạ</span></div>
<div class="mi" style="top:494px;height:45px"><span style="left:49.5px">Tìm kiếm thống kê</span></div>
<div class="mi" style="top:539px;height:45px"><span style="left:49.5px">Danh mục</span><b class="car"></b></div>
<div class="mi" style="top:584px;height:45px"><span style="left:47.3px">Hệ thống</span><b class="car"></b></div>
<div class="mi" style="top:629px;height:45px"><span style="left:49.5px">Trợ giúp</span><b class="car"></b></div>
<div class="mi" style="top:674px;height:46px"><span style="left:49.5px">Tri thức</span><b class="car"></b></div>
<svg class="abs" style="left:10.90px;top:8.30px" width="24.6" height="21.8" viewBox="0 0 24.6 21.8"><path fill="#fff" d="M12.3 0 L24.6 11.2 H21 V21.8 H14.9 V14.2 H9.7 V21.8 H3.6 V11.2 H0 Z"/></svg>
<svg class="abs" style="left:12.00px;top:54.80px" width="24" height="21" viewBox="0 0 24 21"><circle cx="12" cy="4" r="2.4" fill="none" stroke="#fff" stroke-width="1.7"/><rect x="0" y="6.3" width="24" height="14.5" rx="1.6" fill="#fff"/><rect x="6" y="8.2" width="12" height="1.1" fill="#5b90d2"/><ellipse cx="7.6" cy="12.9" rx="1.5" ry="1.9" fill="#5b90d2"/><path d="M4.3 18.2 Q4.5 15.8 7.6 15.8 Q10.7 15.8 10.9 18.2 Z" fill="#5b90d2"/><rect x="13" y="11.3" width="7.4" height="1" fill="#5b90d2"/><rect x="13" y="13.6" width="7.4" height="1" fill="#5b90d2"/><rect x="13" y="16.6" width="7.4" height="1" fill="#5b90d2"/></svg>
<svg class="abs" style="left:12.00px;top:100.20px" width="22" height="22" viewBox="0 0 22 22"><circle cx="11" cy="11" r="11" fill="#fff"/><circle cx="5.3" cy="11.2" r="2" fill="#1f5fbf"/><circle cx="11" cy="11.2" r="2" fill="#1f5fbf"/><circle cx="16.7" cy="11.2" r="2" fill="#1f5fbf"/></svg>
<svg class="abs" style="left:10.00px;top:144.00px" width="27" height="20" viewBox="0 0 27 20"><path fill="#fff" d="M0.2 2.6 L4.6 1.4 L5.6 2.2 L9.2 0.9 L12.2 1.9 L15.2 0.7 L20.2 2.3 L22 1.5 L26.4 2.8 V10.6 L23.2 10.9 L21.4 12.2 L21.6 13.6 L19.6 15.2 L18.6 16.9 L16.4 17.9 L14.4 19.1 L12.4 18.3 L10.6 19.1 L8.2 17.5 L6 15.6 L3.4 12.4 L2.6 10.6 L0.2 10.3 Z"/><path fill="none" stroke="#3276c3" stroke-width="1.1" stroke-linecap="round" d="M9.6 3.2 L8.2 5.3 Q8.4 7 10.4 6.6 L13 5.4 L14.6 5.4 L21.2 11.4"/><path fill="none" stroke="#3276c3" stroke-width="0.9" stroke-linecap="round" d="M17.5 12.3 L19.6 14.4 M15.4 13.6 L17.8 16.2 M13.4 15 L15.6 17.4 M11.4 16.4 L13.2 18.4"/><path fill="none" stroke="#3276c3" stroke-width="0.9" stroke-linecap="round" d="M4.2 11.4 L6.4 13.8 M6.2 13.2 L8.6 15.8 M8.2 15 L10.4 17.4"/></svg>
<svg class="abs" style="left:14.20px;top:187.10px" width="22" height="27" viewBox="0 0 22 27"><path fill="#fff" d="M4 0.5 H18 L21.2 5.4 L16.4 13.6 H5.6 L0.8 5.4 Z"/><path fill="#3276c3" d="M6.6 4.6 H15.4 L11 11.6 Z"/><circle cx="11" cy="18.1" r="6.9" fill="#3276c3" stroke="#fff" stroke-width="1.8"/><path fill="#fff" d="M10.9 14.7 H12.2 V21.5 H10.6 V16.7 L9.2 17.3 V16 Z"/></svg>
<svg class="abs" style="left:14.20px;top:232.10px" width="22" height="27" viewBox="0 0 22 27"><path fill="#fff" d="M4 0.5 H18 L21.2 5.4 L16.4 13.6 H5.6 L0.8 5.4 Z"/><path fill="#3276c3" d="M6.6 4.6 H15.4 L11 11.6 Z"/><circle cx="11" cy="18.1" r="6.9" fill="#3276c3" stroke="#fff" stroke-width="1.8"/><path fill="#fff" d="M10.9 14.7 H12.2 V21.5 H10.6 V16.7 L9.2 17.3 V16 Z"/></svg>
<svg class="abs" style="left:11.20px;top:279.50px" width="23" height="23" viewBox="0 0 23 23"><path fill="#fff" d="M5.4 0.5 H17.8 V5.4 Q17.8 10.6 14.8 12.9 Q13 14.3 12.3 15.6 L11.6 17 L10.9 15.6 Q10.2 14.3 8.4 12.9 Q5.4 10.6 5.4 5.4 Z"/><path fill="none" stroke="#fff" stroke-width="1.5" d="M5.6 2.2 H1.3 Q1.3 7.6 6.6 8.6 M17.6 2.2 H21.9 Q21.9 7.6 16.6 8.6"/><path fill="#3276c3" d="M11.6 3.6 L12.5 6 L15 6.1 L13 7.7 L13.7 10.1 L11.6 8.7 L9.5 10.1 L10.2 7.7 L8.2 6.1 L10.7 6 Z"/><path fill="#fff" d="M7.2 17.8 H16 L19.6 22.4 H3.6 Z"/></svg>
<svg class="abs" style="left:13.50px;top:324.50px" width="22" height="23" viewBox="0 0 22 23"><rect x="0.5" y="2.3" width="20.8" height="14" rx="0.8" fill="#fff"/><rect x="8.6" y="0.4" width="4.4" height="2.4" rx="0.8" fill="#fff"/><path fill="#fff" d="M4.6 17.6 H8.2 L6.4 22.6 H2.2 Z M13.6 17.6 H17.2 L19.6 22.6 H15.4 Z"/><path fill="none" stroke="#3276c3" stroke-width="1" d="M4 10.6 H6.4 V8.4 M9.4 7.6 V10.6 H11.4 V9 M14.4 10 L17.8 6.8"/></svg>
<svg class="abs" style="left:12.00px;top:370.20px" width="22" height="22" viewBox="0 0 22 22"><circle cx="11" cy="11" r="11" fill="#fff"/><circle cx="5.3" cy="11.2" r="2" fill="#1f5fbf"/><circle cx="11" cy="11.2" r="2" fill="#1f5fbf"/><circle cx="16.7" cy="11.2" r="2" fill="#1f5fbf"/></svg>
<svg class="abs" style="left:13.00px;top:415.00px" width="20" height="23.2" viewBox="0 0 20 23.2"><path fill="#fff" d="M0.8 0 H12 L19.7 7.6 V22.4 Q19.7 23.2 18.9 23.2 H0.8 Q0 23.2 0 22.4 V0.8 Q0 0 0.8 0 Z"/><path fill="#dfe9f6" d="M12 0 L19.7 7.6 H12.8 Q12 7.6 12 6.8 Z"/><path fill="none" stroke="#3276c3" stroke-width="0.6" d="M12.3 0.4 V6.8 Q12.3 7.3 12.8 7.3 H19.3"/><rect x="5" y="10" width="9.2" height="1" fill="#3276c3"/><rect x="5" y="13" width="9.2" height="1" fill="#3276c3"/><rect x="5" y="16.2" width="9.2" height="1.8" fill="#3276c3"/></svg>
<svg class="abs" style="left:12.50px;top:460.50px" width="23" height="22" viewBox="0 0 23 22"><rect x="1.6" y="0.6" width="17.8" height="20.8" rx="1.2" fill="#fff"/><rect x="2.6" y="1.9" width="15.8" height="0.7" fill="#3276c3"/><path fill="#fff" d="M19.2 4.4 H21.8 V6.4 H19.2 Z M19.2 7.4 H21.8 V9.4 H19.2 Z M19.2 10.4 H21.8 V12.4 H19.2 Z"/><path fill="none" stroke="#fff" stroke-width="0.9" d="M0.4 6.4 L2.4 4.6 M0.4 9.4 L2.4 7.6 M0.4 12.4 L2.4 10.6 M0.4 15.4 L2.4 13.6 M0.4 18.4 L2.4 16.6"/><ellipse cx="10.6" cy="7.4" rx="1.7" ry="2.1" fill="#3276c3"/><path fill="#3276c3" d="M7.2 13.2 Q7.2 10.4 10.6 10.4 Q14 10.4 14 13.2 Z"/></svg>
<svg class="abs" style="left:13.00px;top:503.00px" width="29.5" height="26.5" viewBox="0 0 29.5 26.5"><path fill="#fff" d="M0.6 0.8 H2.1 V24.3 H28.8 V25.8 H0.6 Z"/><rect x="3.9" y="7.3" width="5.3" height="15.4" fill="#fff"/><rect x="10.1" y="0.8" width="5.8" height="21.9" fill="#fff"/><rect x="16.8" y="13.5" width="5.3" height="9.2" fill="#fff"/><rect x="23" y="20.1" width="5.3" height="2.6" fill="#fff"/></svg>
<svg class="abs" style="left:10.30px;top:550.00px" width="25" height="19.6" viewBox="0 0 26 20"><path fill="#fff" d="M1.4 2.4 Q6.6 -0.8 12.4 1.8 V17 Q6.6 14.8 1.4 16.4 Z M24.6 2.4 Q19.4 -0.8 13.6 1.8 V17 Q19.4 14.8 24.6 16.4 Z"/><path fill="#fff" opacity=".85" d="M0.4 3.6 H1.6 V17.2 Q7 15.8 11.2 18 Q13 18.9 14.8 18 Q19 15.8 24.4 17.2 V3.6 H25.6 V18.6 Q19.6 17.4 15.4 19 Q13 19.8 10.6 19 Q6.4 17.4 0.4 18.6 Z"/></svg>
<svg class="abs" style="left:10.80px;top:595.00px" width="24" height="24" viewBox="0 0 24 24"><path fill="#fff" stroke="#fff" stroke-width="2.2" stroke-linejoin="round" d="M9.63 4.05 L10.37 1.22 L13.63 1.22 L14.37 4.05 L15.95 4.70 L18.47 3.23 L20.77 5.53 L19.30 8.05 L19.95 9.63 L22.78 10.37 L22.78 13.63 L19.95 14.37 L19.30 15.95 L20.77 18.47 L18.47 20.77 L15.95 19.30 L14.37 19.95 L13.63 22.78 L10.37 22.78 L9.63 19.95 L8.05 19.30 L5.53 20.77 L3.23 18.47 L4.70 15.95 L4.05 14.37 L1.22 13.63 L1.22 10.37 L4.05 9.63 L4.70 8.05 L3.23 5.53 L5.53 3.23 L8.05 4.70Z"/><circle cx="12" cy="12" r="3.75" fill="#fff" stroke="#3276c3" stroke-width="3"/></svg>
<svg class="abs" style="left:13.00px;top:640.60px" width="22.4" height="22.4" viewBox="0 0 22.4 22.4"><circle cx="11.2" cy="11.2" r="11.1" fill="#fff"/><path fill="none" stroke="#3276c3" stroke-width="1.5" stroke-linecap="round" d="M7.6 8 Q7.8 4.6 11.2 4.6 Q14.8 4.6 14.8 7.8 Q14.8 9.6 12.8 11.2 Q11.3 12.5 11.3 14.6"/><circle cx="11.3" cy="17.8" r="1.15" fill="#3276c3"/></svg>
<svg class="abs" style="left:12.00px;top:683.00px" width="25" height="28" viewBox="0 0 25 28"><path fill="none" stroke="#fff" stroke-width="1.9" stroke-linejoin="round" d="M12.4 1.3 L23.6 7.8 V19.7 L12.4 26.6 L1.3 19.7 V7.8 Z M1.8 8.2 L12.4 13.6 L23.2 8.2 M12.4 13.6 V26.2"/></svg></div>
  <div id="tab"><i style="top:14px"></i><i style="top:20px"></i><i style="top:26px"></i><b style="position:absolute;left:0;top:41px;width:47px;height:1px;background:#5687c6"></b><b style="position:absolute;left:0;top:39px;width:47px;height:2px;background:linear-gradient(rgba(40,90,160,0),rgba(40,90,160,.35))"></b></div>
</div></div>
</body>
</html>
